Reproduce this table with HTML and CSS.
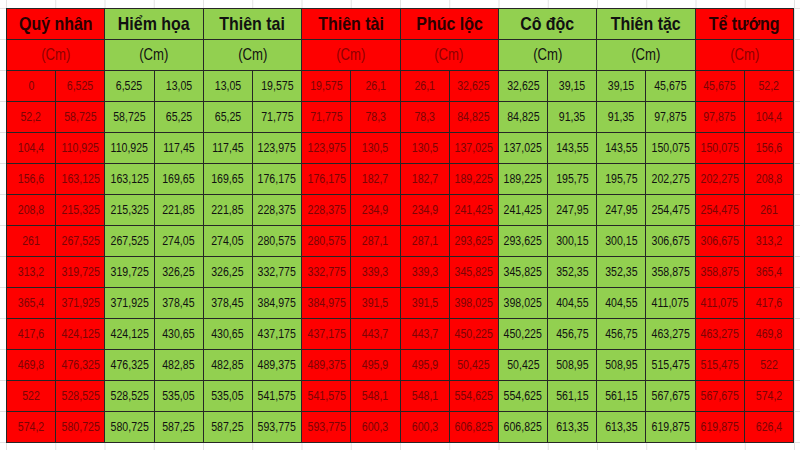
FILE: index.html
```html
<!DOCTYPE html>
<html lang="vi">
<head>
<meta charset="utf-8">
<title>Thước Lỗ Ban</title>
<link rel="stylesheet" href="styles.css">
</head>
<body>
<table class="sheet">
<colgroup>
<col><col><col><col><col><col><col><col><col><col><col><col><col><col><col><col>
</colgroup>
<thead>
<tr class="head">
<th colspan="2" class="r"><span>Quý nhân</span></th><th colspan="2" class="g"><span>Hiểm họa</span></th><th colspan="2" class="g"><span>Thiên tai</span></th><th colspan="2" class="r"><span>Thiên tài</span></th><th colspan="2" class="r"><span>Phúc lộc</span></th><th colspan="2" class="g"><span>Cô độc</span></th><th colspan="2" class="g"><span>Thiên tặc</span></th><th colspan="2" class="r"><span>Tể tướng</span></th>
</tr>
<tr class="unit">
<td colspan="2" class="r"><span>(Cm)</span></td><td colspan="2" class="g"><span>(Cm)</span></td><td colspan="2" class="g"><span>(Cm)</span></td><td colspan="2" class="r"><span>(Cm)</span></td><td colspan="2" class="r"><span>(Cm)</span></td><td colspan="2" class="g"><span>(Cm)</span></td><td colspan="2" class="g"><span>(Cm)</span></td><td colspan="2" class="r"><span>(Cm)</span></td>
</tr>
</thead>
<tbody id="body"></tbody>
</table>
<script src="app.js"></script>
</body>
</html>
```
FILE: app.js
```js
const rows = [
"0|6,525|6,525|13,05|13,05|19,575|19,575|26,1|26,1|32,625|32,625|39,15|39,15|45,675|45,675|52,2",
"52,2|58,725|58,725|65,25|65,25|71,775|71,775|78,3|78,3|84,825|84,825|91,35|91,35|97,875|97,875|104,4",
"104,4|110,925|110,925|117,45|117,45|123,975|123,975|130,5|130,5|137,025|137,025|143,55|143,55|150,075|150,075|156,6",
"156,6|163,125|163,125|169,65|169,65|176,175|176,175|182,7|182,7|189,225|189,225|195,75|195,75|202,275|202,275|208,8",
"208,8|215,325|215,325|221,85|221,85|228,375|228,375|234,9|234,9|241,425|241,425|247,95|247,95|254,475|254,475|261",
"261|267,525|267,525|274,05|274,05|280,575|280,575|287,1|287,1|293,625|293,625|300,15|300,15|306,675|306,675|313,2",
"313,2|319,725|319,725|326,25|326,25|332,775|332,775|339,3|339,3|345,825|345,825|352,35|352,35|358,875|358,875|365,4",
"365,4|371,925|371,925|378,45|378,45|384,975|384,975|391,5|391,5|398,025|398,025|404,55|404,55|411,075|411,075|417,6",
"417,6|424,125|424,125|430,65|430,65|437,175|437,175|443,7|443,7|450,225|450,225|456,75|456,75|463,275|463,275|469,8",
"469,8|476,325|476,325|482,85|482,85|489,375|489,375|495,9|495,9|50,425|50,425|508,95|508,95|515,475|515,475|522",
"522|528,525|528,525|535,05|535,05|541,575|541,575|548,1|548,1|554,625|554,625|561,15|561,15|567,675|567,675|574,2",
"574,2|580,725|580,725|587,25|587,25|593,775|593,775|600,3|600,3|606,825|606,825|613,35|613,35|619,875|619,875|626,4"
];
const pattern = ["r","g","g","r","r","g","g","r"];
const tbody = document.getElementById("body");
rows.forEach(line => {
  const tr = document.createElement("tr");
  tr.className = "data";
  line.split("|").forEach((v, i) => {
    const td = document.createElement("td");
    td.className = pattern[Math.floor(i / 2)];
    const span = document.createElement("span");
    span.textContent = v;
    td.appendChild(span);
    tr.appendChild(td);
  });
  tbody.appendChild(tr);
});
```
FILE: styles.css
```css
html, body {
  margin: 0;
  padding: 0;
  background: #ffffff;
}
body {
  padding: 8px 0 0 6px;
  font-family: "Liberation Sans", Arial, sans-serif;
  background-image:
    linear-gradient(to right, #e3e3e3 1px, transparent 1px),
    linear-gradient(to bottom, #e3e3e3 1px, transparent 1px);
  background-size: 49.25px 31px, 49.25px 31px;
  background-position: 6px 8px, 6px 8px;
  height: 450px;
  box-sizing: border-box;
}
.sheet {
  width: 788px;
  table-layout: fixed;
  border-collapse: collapse;
  border: 1px solid #1a1a1a;
}
.sheet th, .sheet td {
  border: 1px solid #262626;
  text-align: center;
  padding: 0;
  overflow: hidden;
  white-space: nowrap;
}
.sheet span {
  display: inline-block;
  transform: scaleX(0.88);
}
.head th {
  height: 30px;
  font-size: 19px;
  font-weight: bold;
}
.head th span {
  transform: scaleX(0.84);
}
.unit td {
  height: 30px;
  font-size: 16px;
}
.unit td span {
  transform: scaleX(0.82);
}
.data td {
  height: 30px;
  font-size: 12px;
}
.r {
  background: #fe0000;
  color: #7a0505;
}
.head .r {
  color: #2a0000;
}
.unit .r {
  color: #8e0000;
}
.g {
  background: #92d050;
  color: #111111;
}
```
